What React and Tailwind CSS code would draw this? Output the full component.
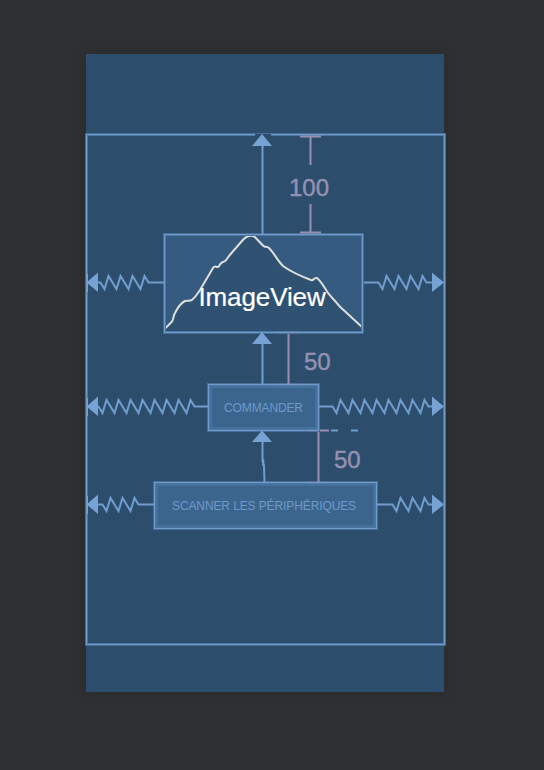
const MOUNTAIN =
  "M2.300 95.300L9 88.500C11 86 10 83 12 80C14 76 18 70 22 68C24 67 26 68.500 29 67C33 64 35 60 37 57L50 35C52 32 53 34.500 55 34C57 33 57 29.500 60 29C63 28.500 63 27 66 23L80.300 6.500C84 2.500 89 1.800 92 4.200C96 8 99 12 101.300 13.500C103 14 104 13 106 15C111 20 114 27 120.300 33.300C127 38 137 43 148 47C151 48 150 44.500 154 45C158 48 161 54 165.300 60.300L177 73.700L199 94";

// Builds the points of a spring that oscillates around y with a 12px period
function spring(from, start, first, count, end, to, y) {
  const points = [`${from},${y}`, `${start},${y}`];
  for (let i = 0; i < count; i++) {
    points.push(`${first + i * 12},${y + 6.5}`, `${first + 4 + i * 12},${y - 6.5}`);
  }
  points.push(`${end},${y}`, `${to},${y}`);
  return points.join(" ");
}

const SPRINGS = [
  spring(97, 100.5, 104.5, 4, 148.5, 164, 282.5),
  spring(364, 378.5, 382.5, 4, 426.5, 433, 282.5),
  spring(97, 98.5, 102.5, 8, 194.5, 208, 406.5),
  spring(319, 332.5, 336.5, 8, 428.5, 433, 406.5),
  spring(97, 102.5, 106.5, 3, 138.5, 154, 504.5),
  spring(377, 392.5, 396.5, 3, 428.5, 433, 504.5),
];

function Connectors() {
  return (
    <svg className="pointer-events-none absolute inset-0" width="544" height="770" fill="none">
      <path d="M255 135H271" stroke="#2c4e6c" strokeWidth="2" />
      <g stroke="#9691b2" strokeWidth="2">
        <path d="M300 136.500H321M300 232.500H321M310.500 137V165M310.500 204V232" />
        <path d="M288.500 334V384M318.500 432V482M320 430.500H329" />
        <path d="M278 332.500H299M278 384.500H299M308 430.500H319M308 482.500H329" opacity=".25" />
      </g>
      <g stroke="#709dce" strokeWidth="2">
        {SPRINGS.map((points) => (
          <polyline key={points} points={points} />
        ))}
        <path d="M262.500 145V234M262.500 343V384M262.500 441V461L264 466L264.500 482" />
        <path d="M263.300 459V466" />
        <path d="M331 430.500H338M351 430.500H358" />
      </g>
      <g fill="#76a3d4">
        <path d="M262 134L272 146H252ZM262 332L272 344H252ZM262 430.500L272 442H252Z" />
        {[282.5, 406.5, 504.5].map((y) => (
          <path key={y} d={`M86.500 ${y}L98 ${y - 10}V${y + 9.5}ZM444 ${y}L432 ${y - 10}V${y + 9.5}Z`} />
        ))}
        <path d="M87 274h1v18h-1zM87 398h1v18h-1zM87 496h1v18h-1z" />
      </g>
    </svg>
  );
}

function Outline({ className, bodyClassName = "", children }) {
  return (
    <div className={`shrink-0 border border-[#466e97] ${className}`}>
      <div className="h-full w-full border border-[#6e9bcc]">
        <div className={`h-full w-full border border-[#4e78a3] ${bodyClassName}`}>{children}</div>
      </div>
    </div>
  );
}

function ButtonNode({ className, children }) {
  return (
    <Outline className={className}>
      <div className="flex h-full w-full items-center justify-center border-2 border-[#45719d] bg-[#3c658e] text-[12px] leading-none whitespace-nowrap text-[#6e9aca]">
        {children}
      </div>
    </Outline>
  );
}

function ImageNode() {
  return (
    <Outline className="mr-1 h-[101px] w-[201px]" bodyClassName="relative flex items-end justify-center bg-[#355b81] pb-[19px]">
      <svg className="absolute inset-0" width="195" height="95" viewBox="3 3 195 95" fill="none">
        <path d={`${MOUNTAIN}V99H2Z`} fill="#2f5273" />
        <path d={MOUNTAIN} stroke="#dedfdd" strokeWidth="2" />
      </svg>
      <span className="relative mr-[3px] text-[26px] leading-[30px] tracking-[-0.1px] text-white [-webkit-text-stroke:0.2px_white]">
        ImageView
      </span>
    </Outline>
  );
}

export default function App() {
  return (
    <main className="relative flex h-[770px] w-[544px] items-start overflow-hidden bg-[#2f3032] pt-[54px] pl-[86px] font-['Liberation_Sans',Arial,sans-serif]">
      <section className="flex h-[638px] w-[358px] flex-col bg-[#2c4e6c] pt-[79px] shadow-[0_0_8px_2px_#2a2b2c]">
        <Outline
          className="-ml-px h-[513px] w-[361px]"
          bodyClassName="flex flex-col items-center gap-[49px] pt-[97px]"
        >
          <ImageNode />
          <ButtonNode className="mr-1 h-[49px] w-[113px]">
            <span className="tracking-[-0.13px]">COMMANDER</span>
          </ButtonNode>
          <ButtonNode className="h-[49px] w-[225px]">
            <span className="mr-[3px] tracking-[-0.11px]">SCANNER LES PÉRIPHÉRIQUES</span>
          </ButtonNode>
        </Outline>
      </section>
      <Connectors />
      <div className="text-[24px] leading-[28px] text-[#9691b2] [-webkit-text-stroke:0.4px_#9691b2]">
        <span className="absolute top-[174px] left-[289px]">100</span>
        <span className="absolute top-[348px] left-[304px]">50</span>
        <span className="absolute top-[446px] left-[334px]">50</span>
      </div>
    </main>
  );
}
